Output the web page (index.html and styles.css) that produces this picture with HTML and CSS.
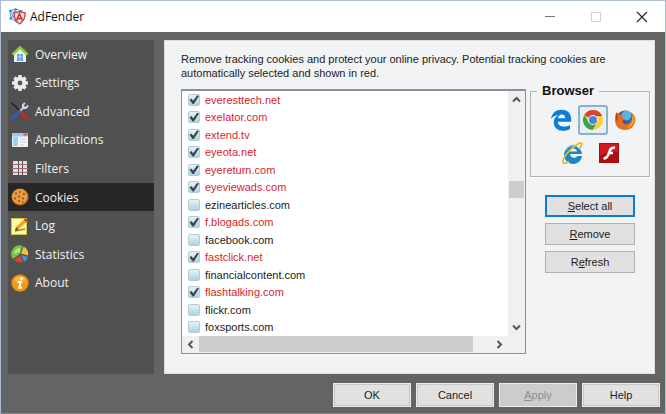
FILE: index.html
```html
<!DOCTYPE html>
<html lang="en">
<head>
    <meta charset="UTF-8">
    <meta name="viewport" content="width=device-width, initial-scale=1.0">
    <title>AdFender</title>
    <link rel="stylesheet" href="styles.css">
</head>
<body>
    <div class="window">
        <header class="title-bar">
            <svg class="app-icon" viewBox="0 0 18 18">
                <g fill="none" stroke="#4aa0de" stroke-width="1">
                    <path d="M1 3L7 1L13 3L15 9L8 15L2 11ZM1 3L8 15M7 1L2 11M13 3L2 11M1 3L15 9M7 1L8 15"/>
                </g>
                <g fill="#2f8fd8"><circle cx="1.500" cy="3" r="1.300"/><circle cx="7" cy="1.500" r="1.300"/><circle cx="13" cy="3" r="1.200"/><circle cx="2" cy="11" r="1.400"/></g>
                <path d="M11 3.500Q14 5 17 5Q17.500 13 11 17Q5 13 5.500 5Q8.500 5 11 3.500Z" fill="#f6ded8" stroke="#c3423c" stroke-width="1.400"/>
                <path d="M8 13L11 6L14 13M9 11H13" fill="none" stroke="#c22d2d" stroke-width="1.600"/>
            </svg>
            <h1 class="app-title">AdFender</h1>
            <div class="window-controls">
                <button class="window-button" aria-label="Minimize"><svg viewBox="0 0 12 12"><path d="M1 5.500H11" stroke="#777"/></svg></button>
                <button class="window-button" aria-label="Maximize" disabled><svg viewBox="0 0 12 12"><path d="M1.500 1.500H10.500V10.500H1.500Z" fill="none" stroke="#d0d0d0"/></svg></button>
                <button class="window-button" aria-label="Close"><svg viewBox="0 0 12 12"><path d="M1 1L11 11M11 1L1 11" stroke="#222" stroke-width="1.100"/></svg></button>
            </div>
        </header>

        <div class="content">
            <nav class="sidebar">
                <a class="nav-item" href="#overview">
                    <svg class="nav-icon" viewBox="0 0 18 18">
                        <path d="M12 2H15V7H12Z" fill="#8a4a3c"/>
                        <path d="M3 8L9 3L15 8V17H3Z" fill="#eef2f4"/>
                        <path d="M6 9H12V16H6Z" fill="#5b9fd6"/><path d="M6 12H12M9 9V16" stroke="#b9dcf4"/>
                        <path d="M1.500 9.500L9 2.500L16.500 9.500" fill="none" stroke="#8ccb35" stroke-width="2.600"/>
                    </svg>
                    Overview
                </a>
                <a class="nav-item" href="#settings">
                    <svg class="nav-icon" viewBox="0 0 18 18">
                        <g stroke="#e4e4e4" stroke-width="3.600"><path d="M9 1V17M1 9H17M3.400 3.400L14.600 14.600M14.600 3.400L3.400 14.600"/></g>
                        <circle cx="9" cy="9" r="6.200" fill="#ececec"/><circle cx="9" cy="9" r="2.400" fill="#555"/>
                    </svg>
                    Settings
                </a>
                <a class="nav-item" href="#advanced">
                    <svg class="nav-icon" viewBox="0 0 18 18" fill="none" stroke-linecap="round">
                        <path d="M1 1L8 8" stroke="#202020" stroke-width="1.600"/><path d="M9.500 10L16 16" stroke="#d02424" stroke-width="3.200"/>
                        <path d="M13 5L8.500 9.500" stroke="#c9ced6" stroke-width="2"/><path d="M13.500 1.500Q11 3 12.500 5.500Q15.500 7 16.500 4" stroke="#d5dae2" stroke-width="2"/>
                        <path d="M8.500 9.500L2 16" stroke="#2862b4" stroke-width="3"/>
                    </svg>
                    Advanced
                </a>
                <a class="nav-item" href="#applications">
                    <svg class="nav-icon" viewBox="0 0 18 18">
                        <rect x="1" y="2" width="16" height="14" rx="1" fill="#f1f3f5"/><rect x="1" y="2" width="16" height="3.500" fill="#a8c4ee"/>
                        <rect x="12.500" y="2.500" width="4" height="2" fill="#d55a4e"/><rect x="2" y="6" width="5" height="9" fill="#9bd3f2"/><path d="M9 8H15M9 11H15M9 14H13" stroke="#d0d3d7"/>
                    </svg>
                    Applications
                </a>
                <a class="nav-item" href="#filters">
                    <svg class="nav-icon" viewBox="0 0 18 18">
                        <g fill="#dedede"><rect x="2" y="2" width="5" height="3"/><rect x="8" y="2" width="3" height="3"/><rect x="12" y="2" width="4" height="3"/><rect x="2" y="6" width="5" height="3"/><rect x="8" y="6" width="3" height="3"/><rect x="12" y="6" width="4" height="3"/><rect x="2" y="10" width="5" height="3"/><rect x="8" y="10" width="3" height="3"/><rect x="12" y="10" width="4" height="3"/><rect x="2" y="14" width="5" height="2"/><rect x="8" y="14" width="3" height="2"/><rect x="12" y="14" width="4" height="2"/></g>
                        <path d="M1 5.500H17M1 9.500H17M1 13.500H17" stroke="#a06a6c"/>
                    </svg>
                    Filters
                </a>
                <a class="nav-item active" href="#cookies">
                    <svg class="nav-icon" viewBox="0 0 18 18">
                        <circle cx="9" cy="9" r="8.500" fill="#c46f20"/><circle cx="8.700" cy="8.500" r="7.600" fill="#e89b48"/>
                        <g fill="#8f4a12"><circle cx="5" cy="5.500" r="1"/><circle cx="9" cy="4" r=".9"/><circle cx="13" cy="6" r="1"/><circle cx="8" cy="8.500" r="1"/><circle cx="12" cy="10.500" r="1"/><circle cx="4" cy="10.500" r="1"/><circle cx="8" cy="13" r="1"/><circle cx="12" cy="14" r=".8"/></g>
                    </svg>
                    Cookies
                </a>
                <a class="nav-item" href="#log">
                    <svg class="nav-icon" viewBox="0 0 18 18">
                        <rect x="0" y="1" width="16" height="17" fill="#d2c53c"/><rect x="1" y="2" width="14" height="15" fill="#fbf7a0"/>
                        <path d="M4 14L14 12" stroke="#8b8a52" stroke-width="1.500"/><path d="M4 14L5 10L12.500 3L15 5.500L7.500 12.500Z" fill="#f2a51d"/><path d="M4 14L5 10L7.500 12.500Z" fill="#6b4a22"/><path d="M12.500 3L14.500 1L17 3.500L15 5.500Z" fill="#d9394a"/>
                    </svg>
                    Log
                </a>
                <a class="nav-item" href="#statistics">
                    <svg class="nav-icon" viewBox="0 0 18 18">
                        <path d="M9 9L2 14A8.500 8.500 0 0 1 11.500 .8Z" fill="#7cc142"/><path d="M10 8.500L12.500 1.500A8 8 0 0 1 17 10.500Z" fill="#f3bf3d"/><path d="M10 10L17 12A8 8 0 0 1 13 16.500Z" fill="#4a94dc"/><path d="M9 10.500L12 17A8.500 8.500 0 0 1 3 14.800Z" fill="#d6452c"/>
                        <path d="M3 9A6 6 0 0 1 9 3V7Z" fill="#b8e389"/>
                    </svg>
                    Statistics
                </a>
                <a class="nav-item" href="#about">
                    <svg class="nav-icon" viewBox="0 0 18 18">
                        <circle cx="9" cy="9" r="8.800" fill="#d97c08"/><circle cx="9" cy="9" r="7.800" fill="#f79a14"/><path d="M3 6A7 7 0 0 1 15 6Q9 9 3 6Z" fill="#fbb64e"/>
                        <circle cx="10.500" cy="4.500" r="1.600" fill="#fff"/><path d="M6.500 8H9.700L8.300 13.700H11" fill="none" stroke="#fff" stroke-width="2"/>
                    </svg>
                    About
                </a>
            </nav>

            <main class="panel">
                <p class="description">Remove tracking cookies and protect your online privacy. Potential tracking cookies are automatically selected and shown in red.</p>

                <div class="panel-body">
                    <div class="cookie-box">
                        <div class="cookie-list">
                            <label class="cookie tracking"><input type="checkbox" checked>everesttech.net</label>
                            <label class="cookie tracking"><input type="checkbox" checked>exelator.com</label>
                            <label class="cookie tracking"><input type="checkbox" checked>extend.tv</label>
                            <label class="cookie tracking"><input type="checkbox" checked>eyeota.net</label>
                            <label class="cookie tracking"><input type="checkbox" checked>eyereturn.com</label>
                            <label class="cookie tracking"><input type="checkbox" checked>eyeviewads.com</label>
                            <label class="cookie"><input type="checkbox">ezinearticles.com</label>
                            <label class="cookie tracking"><input type="checkbox" checked>f.blogads.com</label>
                            <label class="cookie"><input type="checkbox">facebook.com</label>
                            <label class="cookie tracking"><input type="checkbox" checked>fastclick.net</label>
                            <label class="cookie"><input type="checkbox">financialcontent.com</label>
                            <label class="cookie tracking"><input type="checkbox" checked>flashtalking.com</label>
                            <label class="cookie"><input type="checkbox">flickr.com</label>
                            <label class="cookie"><input type="checkbox">foxsports.com</label>
                        </div>
                        <div class="scroll-vertical">
                            <button class="scroll-arrow" aria-label="Scroll up"><svg viewBox="0 0 9 9"><path d="M1 6.500L4.500 3L8 6.500"/></svg></button>
                            <div class="track-vertical"><div class="thumb-vertical"></div></div>
                            <button class="scroll-arrow" aria-label="Scroll down"><svg viewBox="0 0 9 9"><path d="M1 2.500L4.500 6L8 2.500"/></svg></button>
                        </div>
                        <div class="scroll-horizontal">
                            <button class="scroll-arrow" aria-label="Scroll left"><svg viewBox="0 0 9 9"><path d="M6.500 1L3 4.500L6.500 8"/></svg></button>
                            <div class="track-horizontal"><div class="thumb-horizontal"></div></div>
                            <button class="scroll-arrow" aria-label="Scroll right"><svg viewBox="0 0 9 9"><path d="M2.500 1L6 4.500L2.500 8"/></svg></button>
                        </div>
                    </div>

                    <div class="side">
                        <fieldset class="browsers">
                            <legend>Browser</legend>
                            <div class="browser-row">
                                <button class="browser-button" aria-label="Edge">
                                    <svg viewBox="0 0 22 22"><path d="M1 10C2 4 6 .8 11.500 .8C18 .8 21.200 5 21.200 10.500V12.800H7.800C8 16 10.500 17.600 13.800 17.600C16.200 17.600 18.300 17 20 16V20C18 21.200 15.800 21.800 13 21.800C7 21.800 3.800 18 3.800 13.500C3.800 10 5.500 7.500 8.500 6C5 6.200 2.500 7.800 1 10ZM7.900 9.200H15.300C15.300 6.800 14.200 5.400 12 5.400C9.800 5.400 8.300 6.800 7.900 9.200Z" fill="#0b7cd8" fill-rule="evenodd"/></svg>
                                </button>
                                <button class="browser-button selected" aria-label="Chrome">
                                    <svg viewBox="0 0 22 22"><circle cx="11" cy="11" r="10" fill="#f8d038"/><path d="M11 11L2.300 6A10 10 0 0 1 19.700 6H11Z" fill="#dc4234"/><path d="M2.300 6A10 10 0 0 0 10.500 21L15 13.500L11 11L6.700 13.500Z" fill="#36a352"/><path d="M11 6H19.700L19.500 7H11Z" fill="#b9332a"/><circle cx="11" cy="11" r="5" fill="#f2f3f4"/><circle cx="11" cy="11" r="4" fill="#4384d8"/></svg>
                                </button>
                                <button class="browser-button" aria-label="Firefox">
                                    <svg viewBox="0 0 22 22"><circle cx="11" cy="10.500" r="9" fill="#2f5fa8"/><circle cx="12.500" cy="6.500" r="5" fill="#58b4e2"/><path d="M2.500 3L5 5.500L9 5.500L8 8.500L11.500 10L8 12C9 16 14 16.500 17 12C19 9 18 5 16.500 3C20 5 22 9 21 13C20 18 16 21 11 21C5 21 1 17 1 11C1 8 1.500 5 2.500 3Z" fill="#e66f1e"/><path d="M18.500 6C22 12 18 18.500 12 19C17 17 19.500 12 18.500 6Z" fill="#f8bd37"/><path d="M2.500 4L4 7L3 13C1 10 1.500 7 2.500 4Z" fill="#b93f20"/></svg>
                                </button>
                            </div>
                            <div class="browser-row wide">
                                <button class="browser-button" aria-label="Internet Explorer">
                                    <svg viewBox="0 0 22 22"><path d="M20 14A9 9 0 1 1 20 12H8C8.500 16.500 14 16.800 15.500 14ZM8 9.500H15C14.500 5.500 8.800 5.500 8 9.500Z" fill="#1786cb" fill-rule="evenodd"/><path d="M4 8A8 8 0 0 1 15 4.500" fill="none" stroke="#62bdec" stroke-width="1.500"/><path d="M17 7C21.500 1.500 20.500 -1 15 2.500C8 7 1 15 1 19.500C1 22 4 21.500 7 19.500" fill="none" stroke="#efb92c" stroke-width="1.800"/></svg>
                                </button>
                                <button class="browser-button" aria-label="Flash">
                                    <svg viewBox="0 0 22 22"><rect x="1" y="1" width="20" height="20" fill="#a80d12"/><path d="M2 2H20V10Q10 9 2 14Z" fill="#cf1a1e"/><path d="M17 5.500C12.500 5.500 12 8 11 11S9 16.500 5.500 16.500M10 11H15" fill="none" stroke="#fff" stroke-width="2.600"/></svg>
                                </button>
                            </div>
                        </fieldset>
                        <div class="actions">
                            <button class="action-button focused"><span><u>S</u>elect all</span></button>
                            <button class="action-button"><span><u>R</u>emove</span></button>
                            <button class="action-button"><span>R<u>e</u>fresh</span></button>
                        </div>
                    </div>
                </div>
            </main>
        </div>

        <footer class="footer">
            <button class="dialog-button">OK</button>
            <button class="dialog-button">Cancel</button>
            <button class="dialog-button" disabled><span><u>A</u>pply</span></button>
            <button class="dialog-button">Help</button>
        </footer>
    </div>
</body>
</html>
```

FILE: styles.css
```css
* {
    box-sizing: border-box;
}

body {
    margin: 0;
    font-family: "Liberation Sans", Arial, sans-serif;
    font-size: 11px;
    color: #1c1c24;
    background-color: #646464;
}

button {
    font-family: inherit;
    font-size: 11px;
    color: inherit;
    padding: 0;
    border: none;
    background: none;
}

svg {
    display: block;
}

.window {
    min-height: 100vh;
    display: flex;
    flex-direction: column;
    border: 1px solid #aebdd6;
    border-bottom-color: #85858c;
    background-color: #646464;
}

/* title bar */
.title-bar {
    height: 31px;
    display: flex;
    align-items: center;
    padding-left: 8px;
    background-color: #fff;
}

.app-icon {
    width: 17px;
    height: 17px;
    margin-right: 4px;
}

.app-title {
    flex-grow: 1;
    margin: 0;
    font-family: "Open Sans", "Noto Sans", sans-serif;
    font-size: 12px;
    font-weight: normal;
    color: #111;
}

.window-controls {
    display: flex;
}

.window-button {
    width: 46px;
    height: 30px;
    display: flex;
    align-items: center;
    justify-content: center;
}

.window-button svg {
    width: 12px;
    height: 12px;
}

/* layout */
.content {
    flex-grow: 1;
    display: flex;
    gap: 10px;
    padding: 8px 10px 0 7px;
}

.sidebar {
    width: 146px;
    flex-shrink: 0;
    display: grid;
    grid-template-rows: repeat(9, 1fr);
    padding-bottom: 77px;
    background-color: #505050;
}

.nav-item {
    display: flex;
    align-items: center;
    gap: 6px;
    padding-left: 3px;
    font-family: "Open Sans", "Noto Sans", sans-serif;
    font-size: 12px;
    color: #f0f0f0;
    text-decoration: none;
}

.nav-item.active {
    background-color: #262626;
}

.nav-icon {
    width: 18px;
    height: 18px;
}

.panel {
    flex-grow: 1;
    padding: 11px 4px 18px 16px;
    border: 1px solid #dcdfe2;
    background-color: #f1f3f5;
}

.description {
    margin: 0 0 9px;
    line-height: 14px;
}

.panel-body {
    display: flex;
    gap: 4px;
}

/* cookie list */
.cookie-box {
    flex-grow: 1;
    display: grid;
    grid-template-columns: 1fr 17px;
    grid-template-rows: 245px 17px;
    border: 1px solid #8b909b;
    border-top-width: 2px;
    background-color: #fff;
}

.cookie-list {
    display: grid;
    grid-auto-rows: 1fr;
    padding-left: 6px;
}

.cookie {
    display: flex;
    align-items: center;
    gap: 5px;
}

.cookie.tracking {
    color: #dc1c2c;
}

.cookie input {
    appearance: none;
    width: 12px;
    height: 12px;
    margin: 0;
    border: 1px solid #b5ccd4;
    border-radius: 2px;
    background: linear-gradient(#e8f2f5, #a8d5e2);
}

.cookie input:checked::before {
    content: "";
    display: block;
    width: 10px;
    height: 10px;
    background-color: #3a454c;
    clip-path: polygon(5% 50%, 22% 38%, 42% 60%, 82% 5%, 100% 12%, 48% 92%, 36% 92%);
}

/* scrollbars */
.scroll-arrow {
    width: 17px;
    height: 17px;
    display: flex;
    align-items: center;
    justify-content: center;
}

.scroll-arrow svg {
    width: 9px;
    height: 9px;
    fill: none;
    stroke: #555;
    stroke-width: 2;
}

.scroll-vertical {
    display: flex;
    flex-direction: column;
    background-color: #f0f0f0;
}

.track-vertical {
    flex-grow: 1;
    padding-top: 73px;
}

.thumb-vertical {
    height: 17px;
    margin: 0 1px;
    background-color: #cdcdcd;
}

.scroll-horizontal {
    grid-column: 1 / -1;
    display: flex;
    padding-right: 17px;
    background-color: #f0f0f0;
}

.track-horizontal {
    flex-grow: 1;
    display: flex;
}

.thumb-horizontal {
    width: 94%;
    margin-bottom: 1px;
    background-color: #cdcdcd;
}

/* browsers */
.side {
    width: 120px;
    flex-shrink: 0;
    margin-top: -5px;
}

.browsers {
    margin: 0;
    padding: 7px 0 8px 6px;
    min-width: 0;
    border: 1px solid #b2b4b6;
    box-shadow: 1px 1px #fff;
}

.browsers legend {
    padding: 0 5px;
    font-size: 13px;
    line-height: 14px;
    font-weight: bold;
    color: #111;
}

.browser-row {
    display: flex;
    justify-content: center;
    gap: 2px;
}

.browser-row.wide {
    gap: 6px;
    margin-top: 3px;
    padding-right: 4px;
}

.browser-button {
    width: 30px;
    height: 30px;
    display: flex;
    align-items: center;
    justify-content: center;
    border-radius: 3px;
}

.browser-button.selected {
    border: 2px solid #8ab2d0;
    background-color: #e9eef3;
}

.browser-button svg {
    width: 22px;
    height: 22px;
    flex-shrink: 0;
}

/* buttons */
.actions {
    display: flex;
    flex-direction: column;
    align-items: center;
    gap: 6px;
    padding-top: 18px;
}

.action-button {
    width: 90px;
    height: 22px;
    border: 1px solid #b0b0b0;
    background-color: #e1e1e1;
}

.action-button.focused {
    border: 2px solid #0a7bdb;
}

.footer {
    display: flex;
    justify-content: flex-end;
    gap: 5px;
    padding: 9px 5px 6px;
}

.dialog-button {
    width: 78px;
    height: 24px;
    border: 2px solid #c8c8c8;
    outline: 1px solid #ececec;
    outline-offset: -1px;
    background-color: #e1e1e1;
}

.dialog-button:disabled {
    color: #8e8e8e;
    background-color: #cccccc;
}
```
